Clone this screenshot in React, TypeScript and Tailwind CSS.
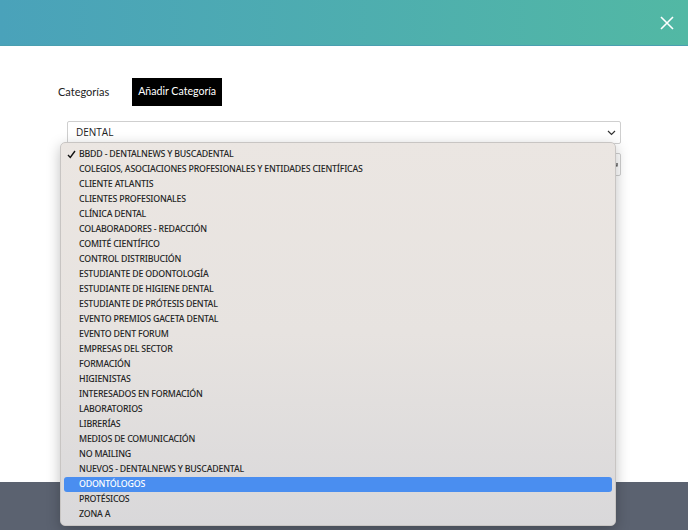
import React from "react";

const items = [
  "BBDD - DENTALNEWS Y BUSCADENTAL",
  "COLEGIOS, ASOCIACIONES PROFESIONALES Y ENTIDADES CIENTÍFICAS",
  "CLIENTE ATLANTIS",
  "CLIENTES PROFESIONALES",
  "CLÍNICA DENTAL",
  "COLABORADORES - REDACCIÓN",
  "COMITÉ CIENTÍFICO",
  "CONTROL DISTRIBUCIÓN",
  "ESTUDIANTE DE ODONTOLOGÍA",
  "ESTUDIANTE DE HIGIENE DENTAL",
  "ESTUDIANTE DE PRÓTESIS DENTAL",
  "EVENTO PREMIOS GACETA DENTAL",
  "EVENTO DENT FORUM",
  "EMPRESAS DEL SECTOR",
  "FORMACIÓN",
  "HIGIENISTAS",
  "INTERESADOS EN FORMACIÓN",
  "LABORATORIOS",
  "LIBRERÍAS",
  "MEDIOS DE COMUNICACIÓN",
  "NO MAILING",
  "NUEVOS - DENTALNEWS Y BUSCADENTAL",
  "ODONTÓLOGOS",
  "PROTÉSICOS",
  "ZONA A",
];

export default function App() {
  return (
    <div className="relative w-[688px] h-[530px] overflow-hidden bg-[#5b6270]" style={{ fontFamily: "'Open Sans', sans-serif" }}>
      <div className="h-[482px] bg-white flex flex-col">
        <div className="h-[46px] bg-gradient-to-r from-[#4aa2ba] to-[#52b8a4] border-b border-[#4a9fb0] flex items-center justify-end pr-[14px]">
          <svg width="14" height="14" viewBox="0 0 14 14">
            <path d="M1 1L13 13M13 1L1 13" stroke="white" strokeWidth="1.6" />
          </svg>
        </div>
        <div className="flex items-center pl-[58px] pt-[32px]" style={{ fontFamily: "Lato, sans-serif" }}>
          <div className="h-[28px] flex items-center text-[11px] text-[#222]">Categorías</div>
          <div className="ml-[23px] px-[6px] h-[28px] flex items-center text-[10.6px] text-white bg-black">Añadir Categoría</div>
        </div>
        <div className="ml-[67px] mt-[15px] w-[554px] flex flex-col gap-[9px]">
          <div className="h-[23px] border border-[#cfcfcf] rounded-[2px] flex items-center justify-between pl-[8px] pr-[4px] text-[10px] text-[#222]">
            <span>DENTAL</span>
            <svg width="9" height="6" viewBox="0 0 9 6"><path d="M1 1l3.5 3.5L8 1" stroke="#333" strokeWidth="1.2" fill="none" /></svg>
          </div>
          <div className="h-[23px] border border-[#cfcfcf] rounded-[2px] flex items-center justify-end pr-[2px]">
            <svg width="4" height="4" viewBox="0 0 4 4"><path d="M3 0v3H0" stroke="#444" strokeWidth="1.2" fill="none" /></svg>
          </div>
        </div>
      </div>
      <div className="absolute left-[60px] top-[142px] w-[556px] h-[384px] rounded-[5px] bg-gradient-to-b from-[#ebe6e2] via-[#e7e3e0] to-[#d9d8da] border border-[#c8c5c3] shadow-[0_4px_14px_rgba(0,0,0,0.25)] pt-[4px] px-[3px]" style={{ fontFamily: "'Noto Sans', sans-serif" }}>
        {items.map((t, i) => (
          <div
            key={t}
            className={
              "h-[15px] flex items-center rounded-[3px] text-[8.8px] tracking-[-0.2px] font-medium leading-none " +
              (t === "ODONTÓLOGOS" ? "bg-[#4a8ef0] text-white" : "text-[#262626]")
            }
          >
            <span className="w-[15px] flex justify-center">
              {i === 0 ? (
                <svg width="9" height="9" viewBox="0 0 9 9"><path d="M1 5l2.3 2.5L8 1" stroke="#111" strokeWidth="1.4" fill="none" /></svg>
              ) : null}
            </span>
            <span>{t}</span>
          </div>
        ))}
      </div>
    </div>
  );
}
